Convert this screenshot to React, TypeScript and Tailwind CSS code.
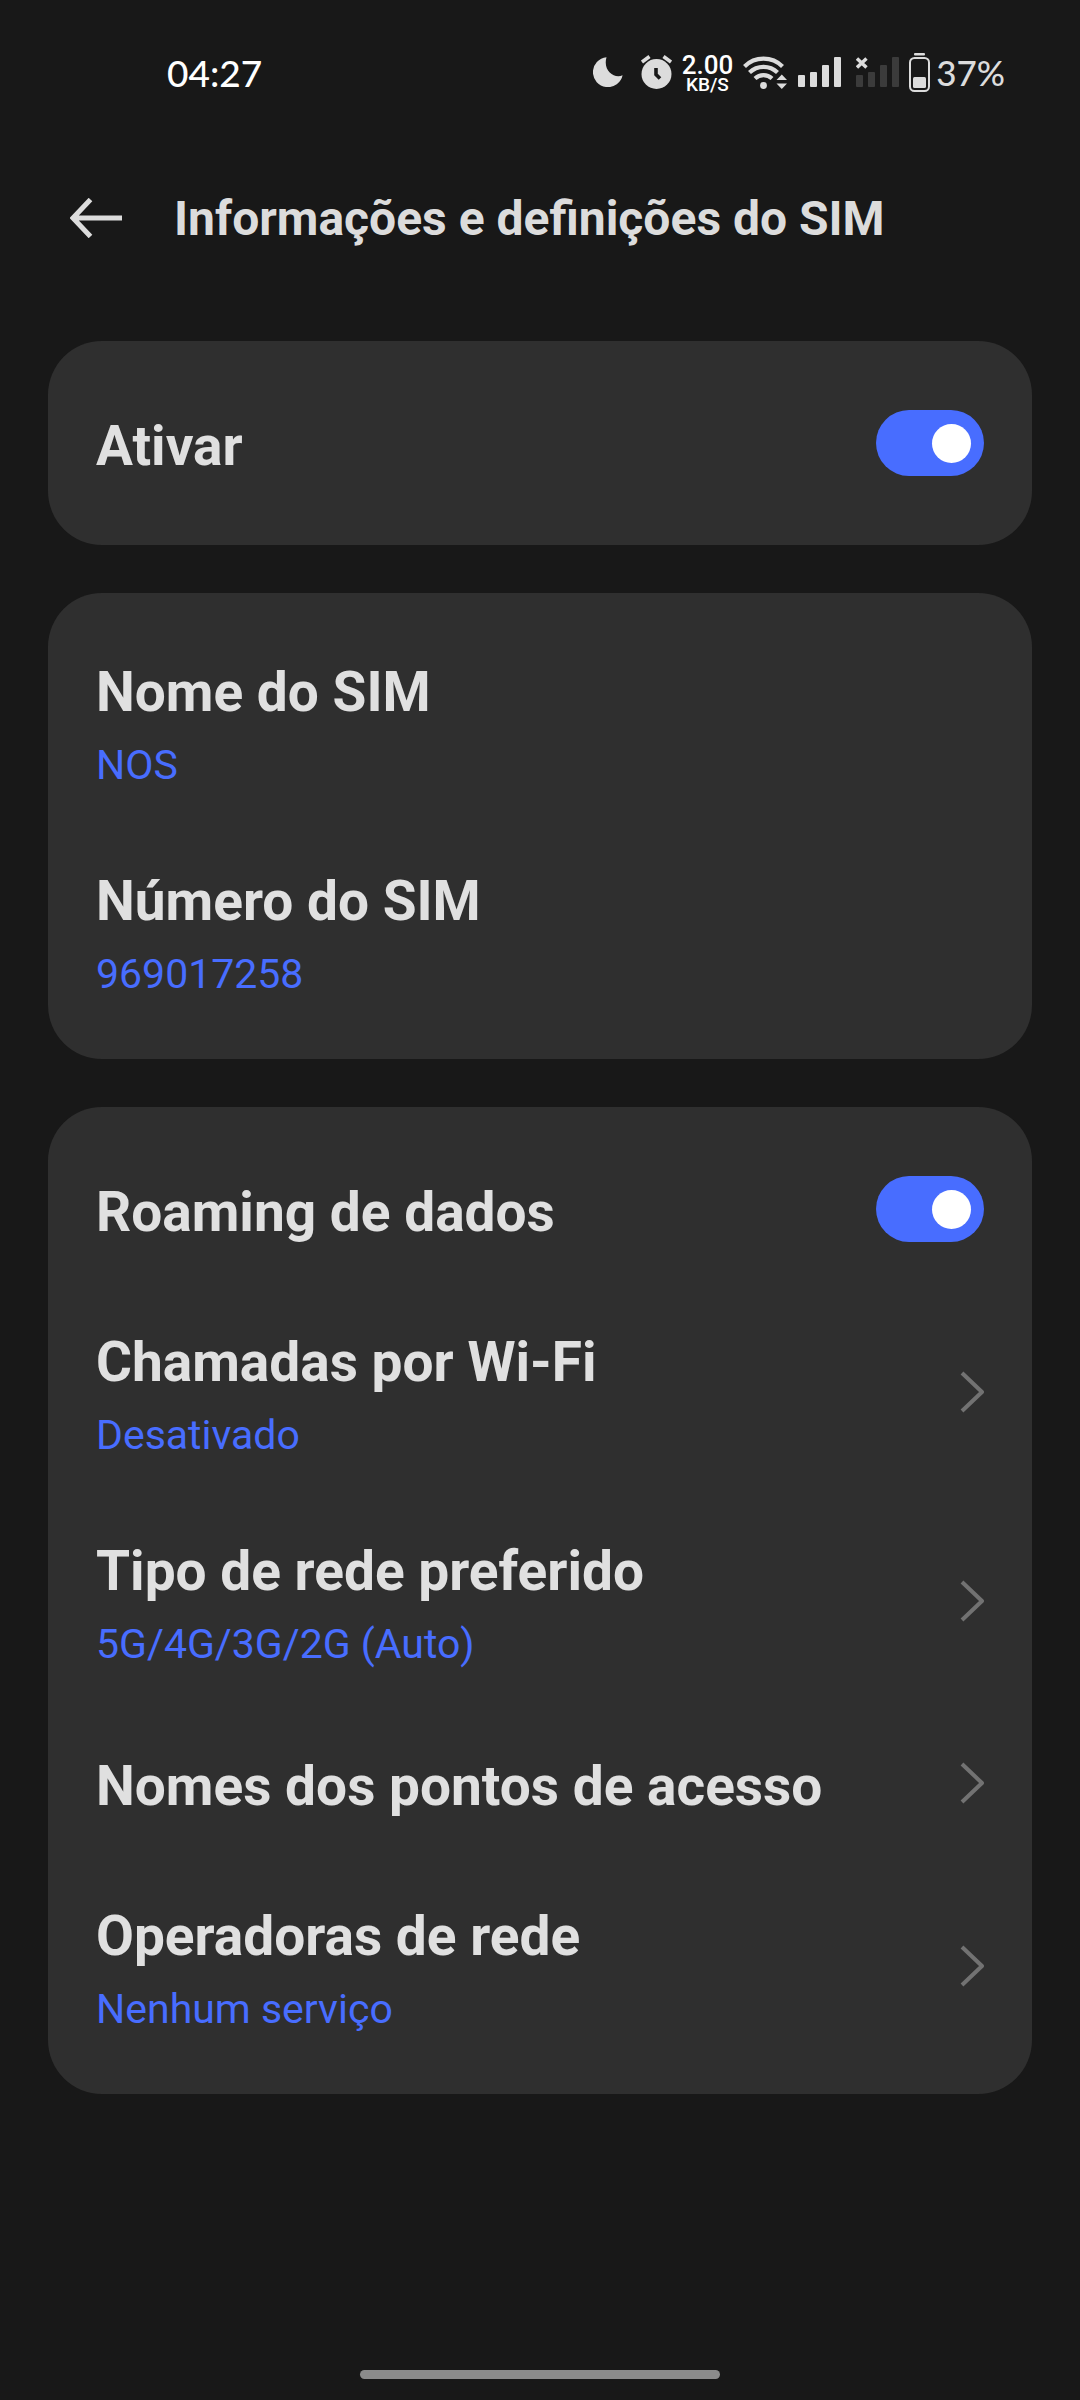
import { useId, useState } from 'react'
import type { ReactNode } from 'react'

function MoonIcon() {
  return (
    <svg className="w-[30px] h-[30px]" viewBox="0 0 30 30" fill="currentColor">
      <path d="M13.5 0.2A15 15 0 1 0 29.6 18.2C22 22 9.5 14.5 13.5 0.2Z" />
    </svg>
  )
}

function AlarmIcon() {
  return (
    <svg className="w-[31px] h-[34px]" viewBox="0 0 31 34" fill="none">
      <circle cx="15.5" cy="19" r="15" fill="currentColor" />
      <path d="M1 7L8.5 1.5M30 7L22.5 1.5" stroke="currentColor" strokeWidth="3.6" />
      <path d="M15 13V19.5L19 23.5" stroke="#181818" strokeWidth="3.6" />
    </svg>
  )
}

function WifiIcon() {
  return (
    <svg className="w-[44px] h-[34px]" viewBox="0 0 44 34" fill="none">
      <g stroke="currentColor" strokeWidth="4.2">
        <path d="M1.5 11.5A27 27 0 0 1 39.5 11.5" />
        <path d="M6.5 17.5A20 20 0 0 1 34.5 17.5" />
        <path d="M12 23.5A12.5 12.5 0 0 1 29 23.5" />
      </g>
      <circle cx="20.5" cy="30.5" r="3.4" fill="currentColor" />
      <path d="M33.5 25L38.8 19.5L44 25ZM33.5 28.5H44L38.8 34Z" fill="currentColor" />
    </svg>
  )
}

function SignalIcon({ active }: { active: boolean }) {
  return (
    <svg className="w-[43px] h-[30px]" viewBox="0 0 43 30">
      <g fill={active ? 'currentColor' : '#3b3b3b'}>
        <rect x="0" y="18" width="7" height="12" rx="1" />
        <rect x="12" y="15" width="7" height="15" rx="1" />
        <rect x="24" y="8" width="7" height="22" rx="1" />
        <rect x="36" y="0" width="7" height="30" rx="1" />
      </g>
      {!active && <path d="M1 1.5L10.5 10.5M10.5 1.5L1 10.5" stroke="currentColor" strokeWidth="3.4" />}
    </svg>
  )
}

function BatteryIcon() {
  return (
    <svg className="w-[21px] h-[39px]" viewBox="0 0 21 39" fill="none">
      <rect x="5" y="0" width="11" height="2.5" rx="1" fill="currentColor" />
      <rect x="1" y="5" width="19" height="33" rx="4.5" stroke="currentColor" strokeWidth="2" />
      <rect x="4" y="24" width="13" height="11" rx="1.5" fill="currentColor" />
    </svg>
  )
}

function StatusBar() {
  return (
    <div className="flex items-center h-[144px] pl-[167px] pr-[75px] text-[#dcdcdc]">
      <span className="font-['Lato'] text-[37px] leading-none font-medium text-white">04:27</span>
      <div className="flex items-center ml-auto">
        <MoonIcon />
        <div className="ml-[18px]"><AlarmIcon /></div>
        <div className="ml-[10px] pt-1 flex flex-col items-center font-medium text-white">
          <span className="text-[26px] leading-[22px]">2.00</span>
          <span className="text-[19px] leading-[18px]">KB/S</span>
        </div>
        <div className="ml-[10px]"><WifiIcon /></div>
        <div className="ml-[11px]"><SignalIcon active /></div>
        <div className="ml-[15px]"><SignalIcon active={false} /></div>
        <div className="ml-[10px]"><BatteryIcon /></div>
        <span className="ml-[6px] font-['Lato'] text-[35px] leading-none font-medium">37%</span>
      </div>
    </div>
  )
}

function Header() {
  return (
    <header className="flex items-center h-[148px] pl-[70px] pr-12 gap-[52px]">
      <button type="button" aria-label="Voltar" className="text-[#dcdcdc]">
        <svg className="w-[52px] h-[40px]" viewBox="0 0 52 40" fill="none" stroke="currentColor" strokeWidth="5">
          <path d="M20.5 1.5L3 20L20.5 38.5M3 20H52" />
        </svg>
      </button>
      <h1 className="pt-0.5 text-[48px] leading-[58px] font-bold text-[#dcdcdc]">Informações e definições do SIM</h1>
    </header>
  )
}

function Card({ children }: { children: ReactNode }) {
  return <section className="flex flex-col py-6 rounded-[54px] bg-[#2f2f2f]">{children}</section>
}

function ToggleRow({ title }: { title: string }) {
  const id = useId()
  const [on, setOn] = useState(true)

  return (
    <div className="flex items-center justify-between px-12">
      <label htmlFor={id} className="pt-12 pb-[42px] text-[55px] leading-[66px] font-bold">{title}</label>
      <input id={id} type="checkbox" role="switch" checked={on} onChange={e => setOn(e.target.checked)}
        className="appearance-none shrink-0 flex items-center w-[108px] h-[66px] px-[13px] rounded-full bg-[#5a5a5a] checked:bg-[#486dff] checked:justify-end before:block before:size-[39px] before:rounded-full before:bg-white" />
    </div>
  )
}

function Row({ title, value, arrow = false }: { title: string; value?: string; arrow?: boolean }) {
  return (
    <button type="button" className="flex items-center justify-between px-12 text-left">
      {value ? (
        <span className="flex flex-col gap-[15px] pt-[42px] pb-9">
          <span className="text-[55px] leading-[66px] font-bold">{title}</span>
          <span className="text-[41px] leading-[50px] text-[#486dff]">{value}</span>
        </span>
      ) : (
        <span className="pt-12 pb-[42px] text-[55px] leading-[66px] font-bold">{title}</span>
      )}
      {arrow && (
        <svg className="w-[24px] h-[42px] shrink-0 text-[#727272]" viewBox="0 0 24 42" fill="none"
          stroke="currentColor" strokeWidth="4" strokeLinejoin="round">
          <path d="M2 2L22 21L2 40" />
        </svg>
      )}
    </button>
  )
}

export default function App() {
  return (
    <div className="flex flex-col min-h-screen bg-[#181818] text-[#e0e0e0] font-['Roboto',sans-serif]">
      <StatusBar />
      <Header />
      <main className="flex flex-col flex-1 gap-12 px-12 pt-[49px] pb-12">
        <Card>
          <ToggleRow title="Ativar" />
        </Card>
        <Card>
          <Row title="Nome do SIM" value="NOS" />
          <Row title="Número do SIM" value="969017258" />
        </Card>
        <Card>
          <ToggleRow title="Roaming de dados" />
          <Row title="Chamadas por Wi-Fi" value="Desativado" arrow />
          <Row title="Tipo de rede preferido" value="5G/4G/3G/2G (Auto)" arrow />
          <Row title="Nomes dos pontos de acesso" arrow />
          <Row title="Operadoras de rede" value="Nenhum serviço" arrow />
        </Card>
      </main>
      <div className="w-1/3 h-[9px] mx-auto mb-[21px] rounded-full bg-[#8b8b8b]" />
    </div>
  )
}
